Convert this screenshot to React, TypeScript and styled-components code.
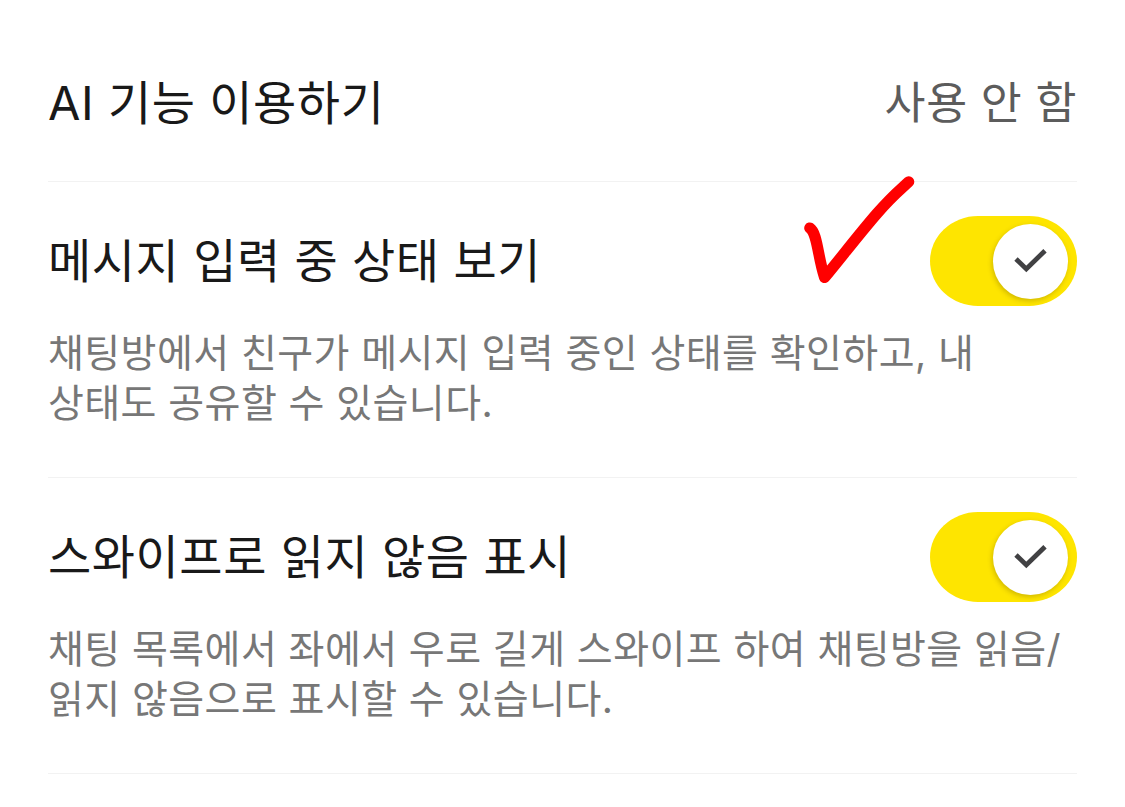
import React, { useState } from "react";
import styled, { createGlobalStyle } from "styled-components";

const GlobalStyle = createGlobalStyle`
  * {
    box-sizing: border-box;
  }

  body {
    margin: 0;
    background: #ffffff;
    font-family: Inter, "Noto Sans CJK KR", sans-serif;
  }
`;

const Page = styled.main`
  width: 1125px;
  height: 807px;
  padding: 0 48px;
  overflow: hidden;
  background: #ffffff;
`;

const Item = styled.section<{ $height: number; $top: number }>`
  height: ${(p) => p.$height}px;
  padding-top: ${(p) => p.$top}px;
  border-bottom: 1px solid #f2f2f2;
`;

const Row = styled.div`
  position: relative;
  display: flex;
  align-items: center;
  justify-content: space-between;
  height: 90px;
`;

const Title = styled.h2`
  margin: 0;
  font-size: 47px;
  font-weight: 400;
  line-height: 60px;
  letter-spacing: 0.55px;
  white-space: nowrap;
  color: #191919;
`;

const Value = styled.span`
  font-size: 44.5px;
  line-height: 60px;
  letter-spacing: 0.6px;
  white-space: nowrap;
  color: #5c5c5c;
`;

const Description = styled.p`
  margin: 22px 0 0;
  font-size: 39px;
  line-height: 50px;
  letter-spacing: 0.42px;
  white-space: nowrap;
  color: #777777;
`;

const Track = styled.button<{ $on: boolean }>`
  display: flex;
  align-items: center;
  justify-content: ${(p) => (p.$on ? "flex-end" : "flex-start")};
  width: 147px;
  height: 90px;
  padding: 0 9px;
  border: none;
  border-radius: 48px / 45px;
  background: ${(p) => (p.$on ? "#fee500" : "#dddddd")};
`;

const Knob = styled.span`
  display: flex;
  align-items: center;
  justify-content: center;
  width: 75px;
  height: 75px;
  border-radius: 50%;
  background: #ffffff;
  box-shadow: -1px 2px 5px rgba(90, 70, 0, 0.28);
`;

const Mark = styled.svg`
  position: absolute;
  left: 752px;
  top: -44px;
`;

const Toggle = ({ label }: { label: string }) => {
  const [on, setOn] = useState(true);

  return (
    <Track $on={on} role="switch" aria-checked={on} aria-label={label} onClick={() => setOn(!on)}>
      <Knob>
        <svg width="36" height="30" viewBox="0 0 36 30" fill="none">
          <path d="M3 13L13.3 23L32 4.7" stroke="#414143" strokeWidth="4.8" />
        </svg>
      </Knob>
    </Track>
  );
};

const App = () => {
  return (
    <>
      <GlobalStyle />
      <Page>
        <Item $height={182} $top={58}>
          <Row>
            <Title>AI 기능 이용하기</Title>
            <Value>사용 안 함</Value>
          </Row>
        </Item>
        <Item $height={296} $top={34}>
          <Row>
            <Title>메시지 입력 중 상태 보기</Title>
            <Toggle label="메시지 입력 중 상태 보기" />
            <Mark width="120" height="116" viewBox="0 0 120 116" fill="none">
              <path
                d="M9.8 56C17.5 61 17.5 84 24.6 105.5C40 87 60 61 77 41.5S98 20 108.7 9.8"
                stroke="#ff0000"
                strokeWidth="11.2"
                strokeLinecap="round"
                strokeLinejoin="round"
              />
            </Mark>
          </Row>
          <Description>
            채팅방에서 친구가 메시지 입력 중인 상태를 확인하고, 내
            <br />
            상태도 공유할 수 있습니다.
          </Description>
        </Item>
        <Item $height={296} $top={34}>
          <Row>
            <Title>스와이프로 읽지 않음 표시</Title>
            <Toggle label="스와이프로 읽지 않음 표시" />
          </Row>
          <Description>
            채팅 목록에서 좌에서 우로 길게 스와이프 하여 채팅방을 읽음/
            <br />
            읽지 않음으로 표시할 수 있습니다.
          </Description>
        </Item>
      </Page>
    </>
  );
};

export default App;
